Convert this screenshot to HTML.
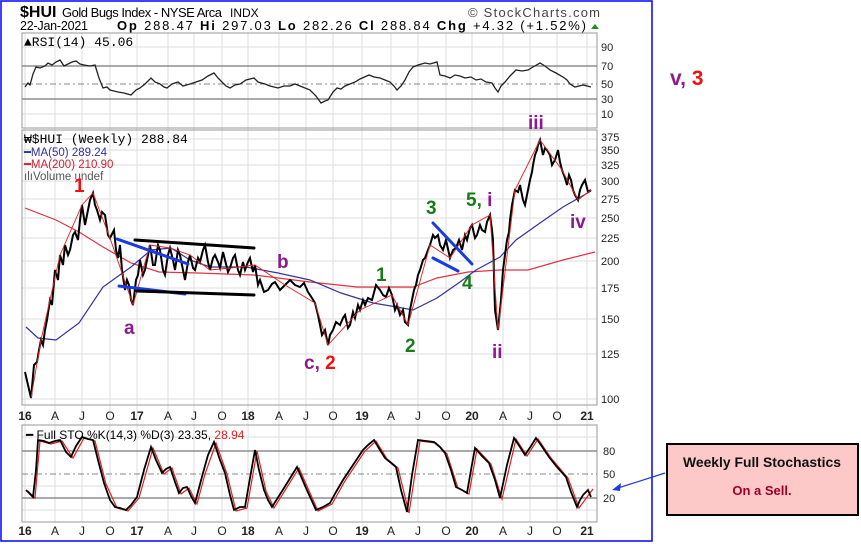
<!DOCTYPE html>
<html><head><meta charset="utf-8"><style>
html,body{margin:0;padding:0;background:#fff;}
svg{display:block;font-family:"Liberation Sans",sans-serif;}
</style></head><body>
<svg width="861" height="544" viewBox="0 0 861 544" xmlns="http://www.w3.org/2000/svg">
<rect x="1" y="1" width="651" height="540" fill="#fff" stroke="#0000ff" stroke-width="1.5"/>
<text x="20" y="17" font-size="16" font-weight="bold">$HUI</text>
<text x="62" y="17" font-size="13" textLength="160" lengthAdjust="spacing">Gold Bugs Index - NYSE Arca</text>
<text x="230" y="17" font-size="12">INDX</text>
<text x="468" y="17" font-size="13" fill="#444" textLength="132" lengthAdjust="spacing">© StockCharts.com</text>
<text x="20" y="30" font-size="12.5" textLength="68" lengthAdjust="spacing">22-Jan-2021</text>
<text x="117" y="30" font-size="13" textLength="469" lengthAdjust="spacing"><tspan font-weight="bold">Op</tspan> 288.47  <tspan font-weight="bold">Hi</tspan> 297.03  <tspan font-weight="bold">Lo</tspan> 282.26  <tspan font-weight="bold">Cl</tspan> 288.84  <tspan font-weight="bold">Chg</tspan> +4.32 (+1.52%)</text>
<path d="M591 29 L595 24 L599 29Z" fill="#2a8a2a"/>
<g stroke="#ddd" stroke-width="1">
<path d="M25 33V522M55 33V522M82 33V522M110 33V522M137 33V522M168 33V522M194 33V522M222 33V522M248 33V522M279 33V522M306 33V522M333 33V522M362 33V522M391 33V522M418 33V522M446 33V522M472 33V522M503 33V522M530 33V522M557 33V522M587 33V522"/>
<path d="M22 47H597M22 114H597M22 139H597M22 150H597M22 165H597M22 181H597M22 199H597M22 218H597M22 238H597M22 261H597M22 288H597M22 319H597M22 354H597M22 399H597M22 437H597M22 486H597M22 510H597"/>
</g>
<g fill="none" stroke="#999">
<rect x="22" y="33" width="575" height="95"/>
<rect x="22" y="130" width="575" height="275"/>
<rect x="22" y="425" width="575" height="97"/>
</g>
<path d="M22 66H597M22 99H597" stroke="#777" stroke-width="1.3"/>
<path d="M22 84H597" stroke="#888" stroke-dasharray="6,3,2,3"/>
<polyline fill="none" stroke="#222" stroke-width="1.3" points="25,87 28,83 30,85 33,74 36,67 40,68 45,66 48,63 52,65 56,62 60,60 64,66 68,64 72,62 76,61 80,64 84,65 90,66 95,65 99,78 103,88 107,87 110,90 114,91 118,92 124,93 131,95 136,90 140,88 145,84 151,78 155,82 160,84 164,87 167,88 172,84 178,82 183,86 190,84 196,82 202,80 208,76 214,73 218,78 222,82 226,86 230,88 235,85 240,84 246,80 254,78 258,82 265,84 270,86 278,88 284,86 290,86 295,84 300,86 305,88 310,90 316,96 321,103 325,101 328,100 333,92 337,88 341,89 345,86 350,84 355,82 360,79 369,75 374,77 380,78 385,80 390,82 394,86 397,90 401,86 405,80 409,72 413,67 418,65 425,63 430,64 437,62 440,75 445,76 450,78 455,75 460,76 465,78 471,77 476,80 481,79 486,82 492,83 495,88 498,92 501,86 505,82 510,76 516,70 522,71 528,70 533,67 540,63 545,66 550,70 556,73 563,77 567,80 570,84 575,87 579,86 583,85 587,86 591,87"/>
<text x="24" y="46" font-size="13" font-family="Liberation Mono,monospace">▲RSI(14) 45.06</text>
<g font-size="11" fill="#222"><text x="601" y="51">90</text><text x="601" y="70">70</text><text x="601" y="88">50</text><text x="601" y="103">30</text><text x="601" y="118">10</text></g>
<polyline fill="none" stroke="#dd3344" stroke-width="1.2" points="25,208 56,220 79,232 103,247 131,263 159,272 198,273 254,275 310,282 357,287 413,287 437,278 468,272 500,270 528,270 563,260 595,252"/>
<polyline fill="none" stroke="#333399" stroke-width="1.2" points="26,327 38,338 56,340 79,323 103,287 131,267 151,250 171,248 190,260 210,267 246,267 278,273 310,280 341,293 373,303 397,307 413,310 437,298 460,282 476,270 500,257 516,240 540,223 563,207 591,191"/>
<polyline fill="none" stroke="#000" stroke-width="2" points="25,372 28,385 31,398 34,365 37,362 39,350 41,340 43,345 45,330 47,320 50,300 52,305 55,270 58,280 60,255 63,265 65,245 68,255 70,250 73,235 75,232 78,240 80,220 82,205 85,225 87,215 90,200 93,193 95,205 97,210 100,220 102,212 105,215 108,235 110,238 114,230 116,250 118,258 120,245 122,270 125,290 127,280 129,285 131,300 133,305 136,280 138,275 140,260 143,275 145,270 148,255 150,245 153,265 155,265 158,245 160,250 163,270 165,275 168,255 170,248 173,260 175,270 178,250 180,255 183,270 185,280 188,262 190,255 193,268 195,270 198,258 200,262 203,250 205,245 208,262 210,270 213,258 215,255 218,262 220,268 223,252 225,260 228,272 230,268 233,258 235,255 238,270 240,275 243,262 245,270 248,262 250,258 253,272 255,265 258,285 260,280 264,292 268,290 272,284 275,282 280,290 285,285 290,280 295,285 300,287 304,283 308,292 312,298 315,303 318,315 320,325 322,335 325,330 328,345 330,335 333,330 336,322 340,325 343,318 345,315 348,328 350,325 353,312 355,318 358,305 360,310 363,300 365,305 368,298 372,300 376,285 380,290 383,295 386,297 389,288 392,295 395,310 397,305 400,315 403,310 405,322 408,325 410,310 412,300 414,290 416,285 418,275 420,270 423,260 425,258 428,250 430,245 433,235 435,238 438,235 440,245 443,250 446,240 450,258 453,250 456,248 459,240 462,250 465,235 467,240 470,228 472,225 475,238 477,235 480,225 482,230 485,232 487,222 490,215 492,230 493,240 495,310 498,330 500,310 501,300 503,270 505,255 507,240 509,232 510,220 512,205 513,200 515,190 518,192 520,185 523,200 525,205 527,195 528,190 530,180 532,172 533,165 535,155 537,150 538,145 540,140 543,155 545,148 547,150 550,155 552,165 555,160 558,150 560,162 562,170 565,178 567,185 569,175 571,180 573,190 575,195 578,200 580,190 582,185 585,180 587,188 588,192 591,190"/>
<polyline fill="none" stroke="#e02020" stroke-width="0.9" points="31,398 41,340 60,255 82,205 93,193 110,238 133,305 150,245 170,248 190,255 210,270 230,268 255,265 285,285 315,303 328,345 360,310 392,295 408,325 430,245 450,258 472,225 490,215 498,330 515,190 540,140 562,170 578,200 591,190"/>
<g stroke-width="3" stroke-linecap="round">
<line x1="117" y1="239" x2="188" y2="264" stroke="#1a3be0"/>
<line x1="119" y1="286" x2="185" y2="294" stroke="#1a3be0"/>
<line x1="135" y1="240" x2="254" y2="248" stroke="#000"/>
<line x1="137" y1="291" x2="254" y2="295" stroke="#000"/>
<line x1="433" y1="223" x2="472" y2="264" stroke="#1a3be0"/>
<line x1="433" y1="258" x2="458" y2="271" stroke="#1a3be0"/>
</g>
<text x="24" y="143" font-size="13" font-family="Liberation Mono,monospace">₩$HUI (Weekly) 288.84</text>
<text x="24" y="156" font-size="11.5" fill="#333399">━MA(50) 289.24</text>
<text x="24" y="168" font-size="11.5" fill="#cc2233">━MA(200) 210.90</text>
<text x="24" y="180" font-size="11.5" fill="#555">ılıVolume undef</text>
<g font-size="11" fill="#222"><text x="601" y="141">375</text><text x="601" y="154">350</text><text x="601" y="169">325</text><text x="601" y="185">300</text><text x="601" y="203">275</text><text x="601" y="222">250</text><text x="601" y="242">225</text><text x="601" y="265">200</text><text x="601" y="292">175</text><text x="601" y="323">150</text><text x="601" y="358">125</text><text x="601" y="403">100</text></g>
<g font-size="19" font-weight="bold">
<text x="74" y="192" fill="#ee1111">1</text>
<text x="124" y="334" fill="#8b1a8b">a</text>
<text x="277" y="268" fill="#8b1a8b">b</text>
<text x="304" y="369" fill="#8b1a8b">c, <tspan fill="#ee1111">2</tspan></text>
<text x="376" y="281" fill="#1a7a1a">1</text>
<text x="405" y="352" fill="#1a7a1a">2</text>
<text x="426" y="214" fill="#1a7a1a">3</text>
<text x="462" y="289" fill="#1a7a1a">4</text>
<text x="466" y="206" fill="#1a7a1a">5, <tspan fill="#8b1a8b">i</tspan></text>
<text x="492" y="358" fill="#8b1a8b">ii</text>
<text x="528" y="129" fill="#8b1a8b">iii</text>
<text x="570" y="228" fill="#8b1a8b">iv</text>
</g>
<g font-size="12" fill="#222" text-anchor="middle">
<text x="25" y="420" font-weight="bold">16</text><text x="55" y="420">A</text><text x="82" y="420">J</text><text x="110" y="420">O</text><text x="137" y="420" font-weight="bold">17</text><text x="168" y="420">A</text><text x="194" y="420">J</text><text x="222" y="420">O</text><text x="248" y="420" font-weight="bold">18</text><text x="279" y="420">A</text><text x="306" y="420">J</text><text x="333" y="420">O</text><text x="362" y="420" font-weight="bold">19</text><text x="391" y="420">A</text><text x="418" y="420">J</text><text x="446" y="420">O</text><text x="472" y="420" font-weight="bold">20</text><text x="503" y="420">A</text><text x="530" y="420">J</text><text x="557" y="420">O</text><text x="587" y="420" font-weight="bold">21</text>
<text x="25" y="535" font-weight="bold">16</text><text x="55" y="535">A</text><text x="82" y="535">J</text><text x="110" y="535">O</text><text x="137" y="535" font-weight="bold">17</text><text x="168" y="535">A</text><text x="194" y="535">J</text><text x="222" y="535">O</text><text x="248" y="535" font-weight="bold">18</text><text x="279" y="535">A</text><text x="306" y="535">J</text><text x="333" y="535">O</text><text x="362" y="535" font-weight="bold">19</text><text x="391" y="535">A</text><text x="418" y="535">J</text><text x="446" y="535">O</text><text x="472" y="535" font-weight="bold">20</text><text x="503" y="535">A</text><text x="530" y="535">J</text><text x="557" y="535">O</text><text x="587" y="535" font-weight="bold">21</text>
</g>
<path d="M22 451H597M22 498H597" stroke="#777" stroke-width="1.3"/>
<path d="M22 474H597" stroke="#888" stroke-dasharray="6,3,2,3"/>
<polyline fill="none" stroke="#e02020" stroke-width="1.2" transform="translate(2,1)" points="26,490 33,497 38,440 49,443 60,440 71,457 82,437 93,440 104,483 115,507 126,510 137,497 151,447 162,473 170,467 179,493 187,487 195,503 203,473 214,442 225,473 234,510 245,507 255,450 264,490 272,507 297,467 316,510 330,503 343,480 363,450 374,440 385,458 396,467 407,512 418,440 434,442 445,453 456,487 467,493 475,448 489,463 500,498 514,438 525,455 536,438 549,457 566,477 577,507 591,488"/>
<polyline fill="none" stroke="#000" stroke-width="1.8" points="26,490 29,493 33,497 36,470 38,440 44,441 49,443 55,441 60,440 66,452 71,457 76,446 82,437 88,439 93,440 98,460 104,483 110,500 115,507 120,508 126,510 131,505 137,497 144,470 151,447 156,460 162,473 166,469 170,467 175,482 179,493 183,488 187,487 191,496 195,503 199,488 203,473 208,455 214,442 220,460 225,473 230,495 234,510 240,507 245,507 250,478 255,450 259,470 264,490 268,500 272,507 284,488 297,467 306,488 316,510 323,507 330,503 336,492 343,480 353,465 363,450 368,445 374,440 380,450 385,458 390,462 396,467 401,490 407,512 412,475 418,440 426,441 434,442 440,447 445,453 451,470 456,487 462,490 467,493 471,470 475,448 482,456 489,463 495,480 500,498 507,465 514,438 520,447 525,455 531,446 536,438 543,448 549,457 557,467 566,477 571,492 577,507 580,500 583,495 588,490 591,497"/>
<text x="26" y="439" font-size="12">━ Full STO %K(14,3) %D(3) 23.35, <tspan fill="#e02020">28.94</tspan></text>
<g font-size="11" fill="#222"><text x="603" y="455">80</text><text x="603" y="478">50</text><text x="603" y="502">20</text></g>
<text x="670" y="85" font-size="21" font-weight="bold" fill="#8b1a8b">v, <tspan fill="#ee1111">3</tspan></text>
<line x1="665" y1="473" x2="618" y2="488" stroke="#1a3be0" stroke-width="1.2"/>
<path d="M612 490 L621 483 L620 491Z" fill="#1a3be0"/>
<rect x="667" y="444" width="191" height="71" fill="#fcc8c8" stroke="#000" stroke-width="2"/>
<text x="762" y="467" font-size="14" font-weight="bold" text-anchor="middle" fill="#111" textLength="158" lengthAdjust="spacingAndGlyphs">Weekly Full Stochastics</text>
<text x="762" y="495" font-size="13" font-weight="bold" text-anchor="middle" fill="#a00028">On a Sell.</text>
</svg>
</body></html>
